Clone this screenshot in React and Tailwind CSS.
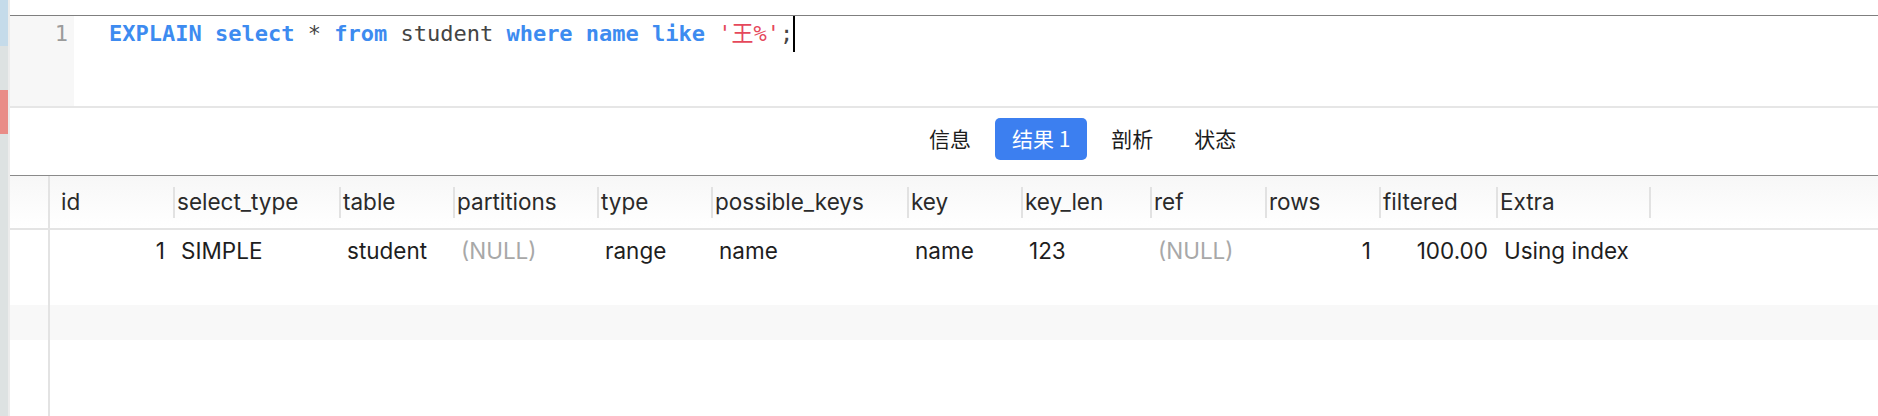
import React from 'react';

const mono = { fontFamily: '"DejaVu Sans Mono", "Noto Sans CJK SC", monospace' };

const columns = [
  { key: 'id', label: 'id', w: 'w-[123px]', first: true },
  { key: 'select_type', label: 'select_type', w: 'w-[166px]' },
  { key: 'table', label: 'table', w: 'w-[114px]' },
  { key: 'partitions', label: 'partitions', w: 'w-[144px]' },
  { key: 'type', label: 'type', w: 'w-[114px]' },
  { key: 'possible_keys', label: 'possible_keys', w: 'w-[196px]' },
  { key: 'key', label: 'key', w: 'w-[114px]' },
  { key: 'key_len', label: 'key_len', w: 'w-[129px]' },
  { key: 'ref', label: 'ref', w: 'w-[115px]' },
  { key: 'rows', label: 'rows', w: 'w-[114px]' },
  { key: 'filtered', label: 'filtered', w: 'w-[117px]' },
  { key: 'Extra', label: 'Extra', w: 'w-[153px]' },
];

const row = {
  id: { v: '1', right: true },
  select_type: { v: 'SIMPLE' },
  table: { v: 'student' },
  partitions: { v: '(NULL)', nul: true },
  type: { v: 'range' },
  possible_keys: { v: 'name' },
  key: { v: 'name' },
  key_len: { v: '123' },
  ref: { v: '(NULL)', nul: true },
  rows: { v: '1', right: true },
  filtered: { v: '100.00', right: true },
  Extra: { v: 'Using index condition', clip: true },
};

function Sep() {
  return <span className="w-[2px] h-[31px] bg-[#e2e2e2] shrink-0" />;
}

function Tab({ children, active }) {
  return (
    <div
      className={`h-[42px] px-[17px] flex items-center rounded-[5px] text-[21px] ${
        active ? 'bg-[#3c7ff0] text-white' : 'text-[#1c1c1c]'
      }`}
    >
      {children}
    </div>
  );
}

function RowHead({ className = '' }) {
  return <div className={`w-[40px] shrink-0 border-r-2 border-[#e3e3e3] self-stretch ${className}`} />;
}

export default function App() {
  return (
    <div className="flex h-[416px] w-[1878px] bg-white overflow-hidden">
      {/* window edge strip */}
      <div className="w-[8px] flex flex-col shrink-0">
        <div className="h-[46px] bg-[#c5dbea]" />
        <div className="h-[44px] bg-[#dde2e2]" />
        <div className="h-[44px] bg-[#e98c87]" />
        <div className="flex-1 bg-[#dde2e2]" />
      </div>
      <div className="w-[2px] bg-[#ececec] shrink-0" />

      <main className="flex-1 flex flex-col min-w-0">
        <div className="h-[15px]" />
        <div className="h-px bg-[#7f7f7f]" />

        {/* editor */}
        <div className="flex h-[90px]">
          <div
            className="w-[64px] bg-[#f7f7f7] text-right pr-[6px] text-[22px] leading-[36px] text-[#9b9b9b]"
            style={mono}
          >
            1
          </div>
          <div className="pl-[35px] text-[22px] leading-[36px] whitespace-pre flex" style={mono}>
            <span className="text-[#3d8bf0] font-bold">EXPLAIN select</span>
            <span className="text-[#444]"> * </span>
            <span className="text-[#3d8bf0] font-bold">from</span>
            <span className="text-[#444]"> student </span>
            <span className="text-[#3d8bf0] font-bold">where name like</span>
            <span className="text-[#444]"> </span>
            <span className="text-[#e5485b]">'王%'</span>
            <span className="text-[#444]">;</span>
            <span className="w-[2px] h-[36px] bg-black" />
          </div>
        </div>
        <div className="h-[2px] bg-[#e6e6e6]" />

        {/* result tabs */}
        <div
          className="h-[67px] flex items-start pt-[10px] pl-[902px] gap-[7px]"
          style={{ fontFamily: '"Noto Sans CJK SC", "Inter", sans-serif' }}
        >
          <Tab>信息</Tab>
          <Tab active>结果 1</Tab>
          <Tab>剖析</Tab>
          <Tab>状态</Tab>
        </div>
        <div className="h-px bg-[#8a8a8a]" />

        {/* grid */}
        <div className="flex-1 flex flex-col text-[22.5px]" style={{ fontFamily: 'Inter, "Liberation Sans", sans-serif' }}>
          <div className="flex h-[52px] bg-linear-to-b from-[#f7f7f7] to-white">
            <RowHead />
            {columns.map((c) => (
              <div key={c.key} className={`${c.w} shrink-0 flex items-center text-[#2a2a2a] whitespace-nowrap`}>
                {c.first ? <span className="pl-[11px]">{c.label}</span> : (
                  <>
                    <Sep />
                    <span className="pl-[2px]">{c.label}</span>
                  </>
                )}
              </div>
            ))}
            <div className="flex items-center">
              <Sep />
            </div>
          </div>
          <div className="h-[2px] bg-[#e4e4e4]" />

          <div className="flex h-[42px]">
            <RowHead />
            {columns.map((c) => {
              const cell = row[c.key];
              return (
                <div
                  key={c.key}
                  className={`${c.w} shrink-0 flex items-center px-[8px] overflow-hidden whitespace-nowrap ${
                    cell.right ? 'justify-end' : ''
                  } ${cell.nul ? 'text-[#a8a8a8]' : 'text-[#1e1e1e]'}`}
                >
                  {cell.clip ? (
                    <span className="w-[129px] overflow-hidden whitespace-nowrap shrink-0">{cell.v}</span>
                  ) : (
                    cell.v
                  )}
                </div>
              );
            })}
          </div>
          <div className="flex h-[33px]">
            <RowHead />
          </div>
          <div className="flex h-[35px] bg-[#f8f8f8]">
            <RowHead />
          </div>
          <div className="flex flex-1">
            <RowHead />
          </div>
        </div>
      </main>
    </div>
  );
}
